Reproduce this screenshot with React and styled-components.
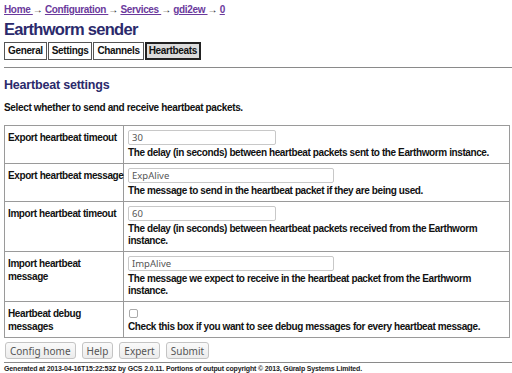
import React from 'react'
import styled, { createGlobalStyle } from 'styled-components'

const GlobalStyle = createGlobalStyle`
  body {
    margin: 0;
    background: #fff;
    color: #111;
    font-family: "Liberation Sans Narrow", "Liberation Sans", Arial, sans-serif;
    font-weight: bold;
    letter-spacing: -0.35px;
  }
`

const Page = styled.div`
  padding: 0 4px;
`

const Crumbs = styled.div`
  font-size: 10px;
  line-height: 12px;
  padding-top: 4px;
  color: #222;
`

const Crumb = styled.a`
  color: #6b3a9c;
  text-decoration: underline;
`

const Title = styled.h1`
  margin: 3px 0 0;
  font-size: 16.5px;
  line-height: 20px;
  letter-spacing: -0.7px;
  color: #2b2a6c;
`

const Tabs = styled.div`
  display: flex;
  gap: 1px;
  margin-top: 3px;
`

const Tab = styled.div`
  box-sizing: border-box;
  height: 18px;
  line-height: ${p => (p.active ? '14px' : '16px')};
  padding: 0 ${p => (p.active ? '2px' : '3px')};
  font-size: 10px;
  border: ${p => (p.active ? '2px solid #222' : '1px solid #555')};
  background: ${p => (p.active ? '#dcdcdc' : '#fff')};
`

const Rule = styled.hr`
  border: none;
  border-top: 1px solid #8a8a8a;
  margin: ${p => p.m || '7px -4px 0 0'};
`

const Heading = styled.h2`
  margin: 9px 0 0;
  font-size: 12.5px;
  line-height: 16px;
  letter-spacing: -0.2px;
  color: #2b2a6c;
`

const Intro = styled.p`
  margin: 8px 0 0;
  font-size: 10px;
  line-height: 13px;
`

const Table = styled.div`
  margin-top: 11px;
  width: 504px;
  border: 1px solid #9a9a9a;
  display: grid;
  grid-template-columns: 119px 1fr;
`

const Label = styled.div`
  font-size: 10px;
  line-height: 13px;
  letter-spacing: -0.4px;
  padding: 5px 0 0 3px;
  white-space: pre;
  border-right: 1px solid #9a9a9a;
  border-top: ${p => (p.first ? 'none' : '1px solid #9a9a9a')};
`

const Field = styled.div`
  padding: 4px 4px 4px;
  border-top: ${p => (p.first ? 'none' : '1px solid #9a9a9a')};
`

const Input = styled.input`
  display: block;
  box-sizing: border-box;
  width: ${p => p.w}px;
  height: 15px;
  padding: 0 3px;
  margin: 0;
  border: 1px solid #c8c8c8;
  border-radius: 2px;
  font-family: "Noto Sans", "Open Sans", sans-serif;
  font-size: 9.5px;
  letter-spacing: 0;
  color: #555;
  background: #fff;
`

const Box = styled.span`
  display: block;
  width: 7px;
  height: 7px;
  margin: 3px 0 3px 1px;
  border: 1px solid #aaa;
  border-radius: 2px;
  background: #fff;
`

const Help = styled.div`
  margin-top: 2px;
  font-size: 10px;
  line-height: 12px;
  letter-spacing: -0.4px;
`

const Buttons = styled.div`
  display: flex;
  gap: 6px;
  margin-top: 4px;
  padding-left: 1px;
`

const Button = styled.button`
  box-sizing: border-box;
  height: 17px;
  margin: 0;
  padding: 0 4px;
  font-family: "Noto Sans", "Open Sans", sans-serif;
  font-size: 10px;
  letter-spacing: 0;
  line-height: 14px;
  color: #555;
  background: linear-gradient(#fafafa, #ececec);
  border: 1px solid #c4c4c4;
  border-radius: 3px;
`

const Footer = styled.div`
  font-size: 7px;
  line-height: 9px;
  letter-spacing: -0.15px;
  margin-top: 1px;
  color: #222;
`

const rows = [
  {
    label: 'Export heartbeat timeout',
    value: '30',
    w: 148,
    help: 'The delay (in seconds) between heartbeat packets sent to the Earthworm instance.',
  },
  {
    label: 'Export heartbeat message',
    value: 'ExpAlive',
    w: 206,
    help: 'The message to send in the heartbeat packet if they are being used.',
  },
  {
    label: 'Import heartbeat timeout',
    value: '60',
    w: 148,
    help: 'The delay (in seconds) between heartbeat packets received from the Earthworm instance.',
  },
  {
    label: 'Import heartbeat\nmessage',
    value: 'ImpAlive',
    w: 206,
    help: 'The message we expect to receive in the heartbeat packet from the Earthworm instance.',
  },
  {
    label: 'Heartbeat debug\nmessages',
    check: true,
    help: 'Check this box if you want to see debug messages for every heartbeat message.',
  },
]

const tabs = ['General', 'Settings', 'Channels', 'Heartbeats']

export default function App() {
  return (
    <>
      <GlobalStyle />
      <Page>
        <Crumbs>
          <Crumb href="#">Home </Crumb> → <Crumb href="#">Configuration </Crumb> →{' '}
          <Crumb href="#">Services </Crumb> → <Crumb href="#">gdi2ew </Crumb> →{' '}
          <Crumb href="#">0</Crumb>
        </Crumbs>
        <Title>Earthworm sender</Title>
        <Tabs>
          {tabs.map(t => (
            <Tab key={t} active={t === 'Heartbeats'}>
              {t}
            </Tab>
          ))}
        </Tabs>
        <Rule />
        <Heading>Heartbeat settings</Heading>
        <Intro>Select whether to send and receive heartbeat packets.</Intro>
        <Table>
          {rows.map((r, i) => (
            <React.Fragment key={r.label}>
              <Label first={i === 0}>{r.label}</Label>
              <Field first={i === 0}>
                {r.check ? <Box /> : <Input w={r.w} defaultValue={r.value} />}
                <Help>{r.help}</Help>
              </Field>
            </React.Fragment>
          ))}
        </Table>
        <Buttons>
          <Button>Config home</Button>
          <Button>Help</Button>
          <Button>Expert</Button>
          <Button>Submit</Button>
        </Buttons>
        <Rule m="3px -4px 0 0" />
        <Footer>
          Generated at 2013-04-16T15:22:53Z by GCS 2.0.11. Portions of output copyright © 2013,
          Güralp Systems Limited.
        </Footer>
      </Page>
    </>
  )
}
